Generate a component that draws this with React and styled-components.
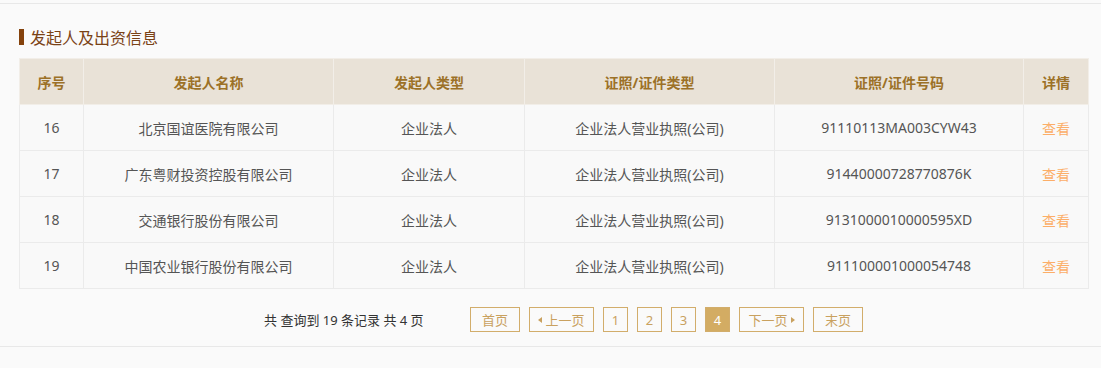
import React from 'react';
import styled, { createGlobalStyle } from 'styled-components';

const GlobalStyle = createGlobalStyle`
    body {
        margin: 0;
        background-color: #fafafa;
        font-family: "Noto Sans", "Noto Sans CJK SC", sans-serif;
    }
`;

const Page = styled.div`
    padding-top: 3px;
`;

const Section = styled.section`
    border-top: 1px solid #e8e8e8;
    border-bottom: 1px solid #e8e8e8;
    padding: 24px 13px 14px 19px;
`;

const Title = styled.h3`
    display: flex;
    align-items: center;
    margin: 0 0 12px;
    height: 18px;
    font-size: 16px;
    font-weight: normal;
    color: #7a4216;
    &::before {
        content: '';
        width: 5px;
        height: 16px;
        margin-right: 6px;
        background-color: #84420c;
    }
`;

const Table = styled.table`
    width: 1069px;
    border-collapse: collapse;
    table-layout: fixed;
    font-size: 14px;
`;

const Th = styled.th`
    height: 45px;
    padding: 0;
    background-color: #e9e2d7;
    border: 1px solid #f2eee8;
    color: #9c7127;
    font-weight: bold;
    text-align: center;
`;

const Td = styled.td`
    height: 45px;
    padding: 0;
    background-color: #f9f9f9;
    border: 1px solid #ebebeb;
    color: #555;
    text-align: center;
`;

const DetailLink = styled.a`
    color: #fcae68;
    text-decoration: none;
    cursor: pointer;
`;

const Pager = styled.div`
    display: flex;
    align-items: center;
    padding: 18px 0 0 245px;
`;

const Summary = styled.span`
    width: 206px;
    font-size: 13px;
    color: #333;
`;

const PageButton = styled.span`
    display: flex;
    align-items: center;
    justify-content: center;
    gap: 3px;
    box-sizing: border-box;
    width: ${p => p.$width}px;
    height: 25px;
    margin-right: 9px;
    border: 1px solid #d2ad6b;
    background-color: ${p => (p.$active ? '#d3ac63' : 'transparent')};
    color: ${p => (p.$active ? '#fff' : '#c9a15f')};
    font-size: 13px;
    cursor: pointer;
`;

const Arrow = styled.i`
    width: 0;
    height: 0;
    border-top: 3px solid transparent;
    border-bottom: 3px solid transparent;
    ${p => (p.$dir === 'left'
        ? 'border-right: 4px solid #c9a15f;'
        : 'border-left: 4px solid #c9a15f;')}
`;

const COLUMNS = [
    { title: '序号', width: 64 },
    { title: '发起人名称', width: 250 },
    { title: '发起人类型', width: 191 },
    { title: '证照/证件类型', width: 250 },
    { title: '证照/证件号码', width: 249 },
    { title: '详情', width: 65 }
];

const ROWS = [
    { no: 16, name: '北京国谊医院有限公司', code: '91110113MA003CYW43' },
    { no: 17, name: '广东粤财投资控股有限公司', code: '91440000728770876K' },
    { no: 18, name: '交通银行股份有限公司', code: '9131000010000595XD' },
    { no: 19, name: '中国农业银行股份有限公司', code: '911100001000054748' }
];

export default function App() {
    return (
        <Page>
            <GlobalStyle />
            <Section>
                <Title>发起人及出资信息</Title>
                <Table>
                    <colgroup>
                        {COLUMNS.map(col => <col key={col.title} style={{ width: col.width }} />)}
                    </colgroup>
                    <thead>
                        <tr>
                            {COLUMNS.map(col => <Th key={col.title}>{col.title}</Th>)}
                        </tr>
                    </thead>
                    <tbody>
                        {ROWS.map(row => (
                            <tr key={row.no}>
                                <Td>{row.no}</Td>
                                <Td>{row.name}</Td>
                                <Td>企业法人</Td>
                                <Td>企业法人营业执照(公司)</Td>
                                <Td>{row.code}</Td>
                                <Td><DetailLink>查看</DetailLink></Td>
                            </tr>
                        ))}
                    </tbody>
                </Table>
                <Pager>
                    <Summary>共 查询到 19 条记录 共 4 页</Summary>
                    <PageButton $width={50}>首页</PageButton>
                    <PageButton $width={65}><Arrow $dir="left" />上一页</PageButton>
                    {[1, 2, 3, 4].map(n => (
                        <PageButton key={n} $width={25} $active={n === 4}>{n}</PageButton>
                    ))}
                    <PageButton $width={65}>下一页<Arrow $dir="right" /></PageButton>
                    <PageButton $width={50}>末页</PageButton>
                </Pager>
            </Section>
        </Page>
    );
}
